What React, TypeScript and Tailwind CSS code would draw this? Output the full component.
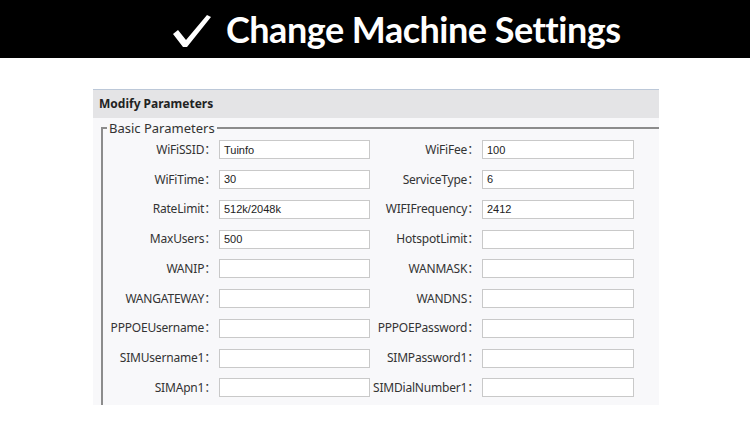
import React from "react";

const rows: [string, string, string, string][] = [
  ["WiFiSSID", "Tuinfo", "WiFiFee", "100"],
  ["WiFiTime", "30", "ServiceType", "6"],
  ["RateLimit", "512k/2048k", "WIFIFrequency", "2412"],
  ["MaxUsers", "500", "HotspotLimit", ""],
  ["WANIP", "", "WANMASK", ""],
  ["WANGATEWAY", "", "WANDNS", ""],
  ["PPPOEUsername", "", "PPPOEPassword", ""],
  ["SIMUsername1", "", "SIMPassword1", ""],
  ["SIMApn1", "", "SIMDialNumber1", ""],
];

function Field({ value }: { value: string }) {
  return (
    <div className="h-[19px] border border-[#c9c9c9] bg-white pl-[4px] flex items-center text-[11px] text-[#222] font-['Liberation_Sans',sans-serif]">
      {value}
    </div>
  );
}

function Label({ text }: { text: string }) {
  return (
    <div className="text-right pr-[3px] text-[12px] tracking-[-0.2px] text-[#333] whitespace-nowrap font-['Noto_Sans','Noto_Sans_CJK_SC',sans-serif]">
      {text}：
    </div>
  );
}

export default function App() {
  return (
    <div className="w-[750px] h-[437px] bg-white overflow-hidden">
      <header className="h-[58px] bg-black flex items-center pl-[172px] gap-[14px]">
        <svg width="40" height="34" viewBox="0 0 40 34" className="mt-[3px]">
          <path
            d="M1 20 L6 16 L14 26 L35 1 L39 3 L15 33 L11 33 Z"
            fill="#fff"
          />
        </svg>
        <h1 className="text-white font-bold text-[36px] tracking-[-0.5px] font-['Lato',sans-serif]">
          Change Machine Settings
        </h1>
      </header>

      <main className="pl-[93px] pt-[31px]">
        <section className="w-[566px]">
          <div className="h-[29px] border-t border-[#bcc8d8] bg-[#e4e4e6] flex items-center px-[6px] text-[12px] font-bold text-[#222] font-['Noto_Sans',sans-serif]">
            Modify Parameters
          </div>
          <div className="h-[287px] bg-[#f8f8fa] pl-[8px] pt-[2px]">
            <fieldset className="border-l-2 border-t-2 border-r-0 border-b-0 border-[#8c8c8c] h-full">
              <legend className="ml-[4px] px-[2px] text-[13px] text-[#333] leading-[16px] font-['Noto_Sans',sans-serif]">
                Basic Parameters
              </legend>
              <div className="grid grid-cols-[118px_151px_112px_152px] auto-rows-[29.75px] items-center -ml-[2px] -mt-[1px]">
                {rows.map(([l1, v1, l2, v2]) => (
                  <React.Fragment key={l1}>
                    <Label text={l1} />
                    <Field value={v1} />
                    <Label text={l2} />
                    <Field value={v2} />
                  </React.Fragment>
                ))}
              </div>
            </fieldset>
          </div>
        </section>
      </main>
    </div>
  );
}
